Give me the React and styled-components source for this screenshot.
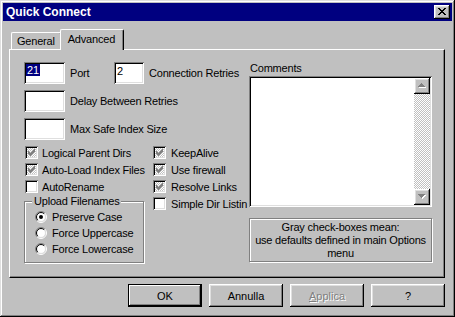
import React from 'react';
import styled, { createGlobalStyle, css } from 'styled-components';

const Global = createGlobalStyle`
  html, body { margin: 0; padding: 0; background: #c0c0c0; }
  body { font-family: "Liberation Sans", Arial, sans-serif; font-size: 11px; }
  #root { width: 455px; height: 317px; }
`;

const raised = css`
  box-shadow: inset -1px -1px #000, inset 1px 1px #fff, inset -2px -2px #808080, inset 2px 2px #dfdfdf;
`;
const sunken = css`
  box-shadow: inset 1px 1px #808080, inset -1px -1px #fff, inset 2px 2px #000, inset -2px -2px #dfdfdf;
`;

const Window = styled.div`
  box-sizing: border-box;
  width: 455px;
  height: 317px;
  padding: 3px;
  background: #c0c0c0;
  color: #000;
  font-family: "Liberation Sans", Arial, sans-serif;
  font-size: 11px;
  letter-spacing: -0.2px;
  display: flex;
  flex-direction: column;
  box-shadow: inset -1px -1px #000, inset 1px 1px #dfdfdf, inset -2px -2px #808080, inset 2px 2px #fff;
`;

const TitleBar = styled.div`
  height: 18px;
  background: #000080;
  display: flex;
  align-items: center;
  justify-content: space-between;
  padding: 0 2px 0 3px;
`;

const Title = styled.span`
  color: #fff;
  font-weight: bold;
  font-size: 12px;
  letter-spacing: 0;
`;

const CloseButton = styled.div`
  width: 16px;
  height: 14px;
  background: #c0c0c0;
  display: flex;
  ${raised}
  svg { display: block; margin: 3px 0 0 4px; }
`;

const Body = styled.div`
  flex: 1;
  display: flex;
  flex-direction: column;
  padding: 8px 7px 0 6px;
`;

const TabRow = styled.div`
  position: relative;
  z-index: 1;
  height: 21px;
  margin-bottom: -1px;
  padding-left: 2px;
  display: flex;
  align-items: flex-end;
`;

const Tab = styled.div`
  box-sizing: border-box;
  background: #c0c0c0;
  line-height: 13px;
  border-left: 1px solid #fff;
  border-top: 1px solid #fff;
  border-right: 1px solid #000;
  border-radius: 2px 2px 0 0;
  box-shadow: inset -1px 0 #808080;
  white-space: nowrap;
  ${(p) =>
    p.$active
      ? css`
          height: 21px;
          padding: 3px 8px 0 7px;
          margin: 0 -2px 0 -2px;
          position: relative;
          z-index: 2;
        `
      : css`
          height: 17px;
          padding: 2px 6px 0 5px;
          margin-bottom: 1px;
        `}
`;

const Panel = styled.div`
  box-sizing: border-box;
  height: 229px;
  border: 1px solid;
  border-color: #fff #000 #000 #fff;
  box-shadow: inset -1px -1px #808080;
  padding: 12px 0 0 14px;
  display: flex;
  gap: 3px;
`;

const LeftCol = styled.div`
  width: 222px;
  display: flex;
  flex-direction: column;
`;

const Fields = styled.div`
  display: flex;
  flex-direction: column;
  gap: 6px;
`;

const FieldRow = styled.div`
  height: 22px;
  display: flex;
  align-items: center;
`;

const Field = styled.div`
  box-sizing: border-box;
  width: ${(p) => p.$w}px;
  height: 22px;
  background: #fff;
  padding: 2px 2px 0 2px;
  line-height: 12px;
  ${sunken}
`;

const Selected = styled.span`
  display: inline-block;
  background: #000080;
  color: #fff;
  padding: 0 1px;
  line-height: 12px;
`;

const Plain = styled.span`
  display: inline-block;
  padding-left: 1px;
  padding-top: 1px;
`;

const FieldLabel = styled.span`
  margin-left: 5px;
  width: ${(p) => (p.$w ? `${p.$w}px` : 'auto')};
  white-space: nowrap;
`;

const CheckGrid = styled.div`
  margin-top: 4px;
  display: grid;
  grid-template-columns: 129px 93px;
`;

const CheckCol = styled.div`
  display: flex;
  flex-direction: column;
  min-width: 0;
`;

const CheckRow = styled.div`
  height: 17px;
  display: flex;
  align-items: center;
  gap: ${(p) => p.$gap || 4}px;
  padding-left: ${(p) => p.$pad || 0}px;
  white-space: nowrap;
`;

const BoxShell = styled.span`
  position: relative;
  flex: none;
  width: 13px;
  height: 13px;
  box-sizing: border-box;
  ${sunken}
  background-color: #fff;
  ${(p) =>
    p.$gray &&
    css`
      background-image: repeating-conic-gradient(#c0c0c0 0 25%, #fff 0 50%);
      background-size: 2px 2px;
      background-position: 0 0;
      background-clip: content-box;
      padding: 2px;
    `}
  svg { position: absolute; left: 3px; top: 3px; display: block; }
`;

const GroupBox = styled.div`
  box-sizing: border-box;
  width: 120px;
  height: 62px;
  margin-top: 6px;
  border: 1px solid #808080;
  box-shadow: inset 1px 1px #fff, 1px 1px #fff;
  padding-left: 10px;
`;

const Legend = styled.div`
  width: fit-content;
  margin: -7px 0 0 -3px;
  padding: 0 2px;
  background: #c0c0c0;
  line-height: 13px;
`;

const RadioList = styled.div`
  margin-top: 1px;
  display: flex;
  flex-direction: column;
`;

const RadioRow = styled.div`
  height: 16px;
  display: flex;
  align-items: center;
  gap: 5px;
  white-space: nowrap;
  svg { display: block; flex: none; }
`;

const RightCol = styled.div`
  width: 183px;
  display: flex;
  flex-direction: column;
`;

const SmallLabel = styled.div`
  line-height: 13px;
  padding-left: 1px;
`;

const Memo = styled.div`
  box-sizing: border-box;
  margin-top: 1px;
  height: 131px;
  background: #fff;
  padding: 2px;
  display: flex;
  justify-content: flex-end;
  ${sunken}
`;

const ScrollBar = styled.div`
  width: 16px;
  display: flex;
  flex-direction: column;
`;

const ScrollButton = styled.div`
  width: 16px;
  height: 16px;
  background: #c0c0c0;
  flex: none;
  ${raised}
  svg { display: block; margin: 5px 0 0 4px; }
`;

const ScrollTrack = styled.div`
  flex: 1;
  background-image: repeating-conic-gradient(#c0c0c0 0 25%, #fff 0 50%);
  background-size: 2px 2px;
`;

const InfoBox = styled.div`
  box-sizing: border-box;
  margin-top: 11px;
  height: 44px;
  border: 1px solid #808080;
  box-shadow: 1px 1px #fff, inset 1px 1px #fff;
  padding-top: 2px;
  text-align: center;
  line-height: 13px;
`;

const ButtonRow = styled.div`
  margin-top: 6px;
  display: flex;
  justify-content: flex-end;
  gap: 7px;
`;

const Button = styled.div`
  box-sizing: border-box;
  width: 74px;
  height: 23px;
  display: flex;
  align-items: center;
  justify-content: center;
  background: #c0c0c0;
  letter-spacing: 0;
  ${(p) =>
    p.$default
      ? css`
          box-shadow: inset 0 0 0 1px #000, inset -2px -2px #000, inset 2px 2px #fff, inset -3px -3px #808080;
        `
      : raised}
  ${(p) =>
    p.$disabled &&
    css`
      color: #808080;
      text-shadow: 1px 1px #fff;
      u { text-decoration: underline; }
    `}
`;

const pixelPath = (rows) => {
  let d = '';
  rows.forEach((row, y) => {
    row.split('').forEach((c, x) => {
      if (c === '#') d += `M${x} ${y}h1v1h-1z`;
    });
  });
  return d;
};

const CHECK = pixelPath([
  '......#',
  '.....##',
  '#...###',
  '##.###.',
  '#####..',
  '.###...',
  '..#....',
]);

const XMARK = pixelPath([
  '##....##',
  '.##..##.',
  '..####..',
  '...##...',
  '..####..',
  '.##..##.',
  '##....##',
]);

const UP = pixelPath(['...#...', '..###..', '.#####.', '#######']);
const DOWN = pixelPath(['#######', '.#####.', '..###..', '...#...']);

const CheckBox = ({ gray }) => (
  <BoxShell $gray={gray}>
    {gray && (
      <svg width="7" height="7" viewBox="0 0 7 7" shapeRendering="crispEdges">
        <path d={CHECK} fill="#808080" />
      </svg>
    )}
  </BoxShell>
);

const Check = ({ label, gray, pad, gap }) => (
  <CheckRow $pad={pad} $gap={gap}>
    <CheckBox gray={gray} />
    <span>{label}</span>
  </CheckRow>
);

const Radio = ({ label, checked }) => {
  const c = 6;
  const p = (r, a) => `${c + r * Math.cos(a)} ${c + r * Math.sin(a)}`;
  const a1 = (3 * Math.PI) / 4;
  const a2 = -Math.PI / 4;
  return (
    <RadioRow>
      <svg width="12" height="12" viewBox="0 0 12 12">
        <circle cx="6" cy="6" r="4.5" fill="#fff" />
        <path d={`M${p(5.5, a1)} A5.5 5.5 0 0 1 ${p(5.5, a2)}`} stroke="#808080" fill="none" />
        <path d={`M${p(5.5, a2)} A5.5 5.5 0 0 1 ${p(5.5, a1)}`} stroke="#fff" fill="none" />
        <path d={`M${p(4.5, a1)} A4.5 4.5 0 0 1 ${p(4.5, a2)}`} stroke="#000" fill="none" />
        <path d={`M${p(4.5, a2)} A4.5 4.5 0 0 1 ${p(4.5, a1)}`} stroke="#dfdfdf" fill="none" />
        {checked && <circle cx="6" cy="6" r="2" fill="#000" />}
      </svg>
      <span>{label}</span>
    </RadioRow>
  );
};

const Arrow = ({ d }) => (
  <svg width="8" height="5" viewBox="0 0 8 5" shapeRendering="crispEdges">
    <path d={d} fill="#fff" transform="translate(1 1)" />
    <path d={d} fill="#808080" />
  </svg>
);

export default function App() {
  return (
    <>
      <Global />
      <Window>
        <TitleBar>
          <Title>Quick Connect</Title>
          <CloseButton>
            <svg width="8" height="7" viewBox="0 0 8 7" shapeRendering="crispEdges">
              <path d={XMARK} fill="#000" />
            </svg>
          </CloseButton>
        </TitleBar>
        <Body>
          <TabRow>
            <Tab>General</Tab>
            <Tab $active>Advanced</Tab>
          </TabRow>
          <Panel>
            <LeftCol>
              <Fields>
                <FieldRow>
                  <Field $w={41}>
                    <Selected>21</Selected>
                  </Field>
                  <FieldLabel $w={44}>Port</FieldLabel>
                  <Field $w={30}>
                    <Plain>2</Plain>
                  </Field>
                  <FieldLabel>Connection Retries</FieldLabel>
                </FieldRow>
                <FieldRow>
                  <Field $w={41} />
                  <FieldLabel>Delay Between Retries</FieldLabel>
                </FieldRow>
                <FieldRow>
                  <Field $w={41} />
                  <FieldLabel>Max Safe Index Size</FieldLabel>
                </FieldRow>
              </Fields>
              <CheckGrid>
                <CheckCol>
                  <Check pad={1} gray label="Logical Parent Dirs" />
                  <Check pad={1} gray label="Auto-Load Index Files" />
                  <Check pad={1} label="AutoRename" />
                  <GroupBox>
                    <Legend>Upload Filenames</Legend>
                    <RadioList>
                      <Radio checked label="Preserve Case" />
                      <Radio label="Force Uppercase" />
                      <Radio label="Force Lowercase" />
                    </RadioList>
                  </GroupBox>
                </CheckCol>
                <CheckCol>
                  <Check gap={5} gray label="KeepAlive" />
                  <Check gap={5} gray label="Use firewall" />
                  <Check gap={5} gray label="Resolve Links" />
                  <Check gap={5} label="Simple Dir Listin" />
                </CheckCol>
              </CheckGrid>
            </LeftCol>
            <RightCol>
              <SmallLabel>Comments</SmallLabel>
              <Memo>
                <ScrollBar>
                  <ScrollButton>
                    <Arrow d={UP} />
                  </ScrollButton>
                  <ScrollTrack />
                  <ScrollButton>
                    <Arrow d={DOWN} />
                  </ScrollButton>
                </ScrollBar>
              </Memo>
              <InfoBox>
                Gray check-boxes mean:
                <br />
                use defaults defined in main Options
                <br />
                menu
              </InfoBox>
            </RightCol>
          </Panel>
          <ButtonRow>
            <Button $default>OK</Button>
            <Button>Annulla</Button>
            <Button $disabled>
              <span>
                <u>A</u>pplica
              </span>
            </Button>
            <Button>?</Button>
          </ButtonRow>
        </Body>
      </Window>
    </>
  );
}
